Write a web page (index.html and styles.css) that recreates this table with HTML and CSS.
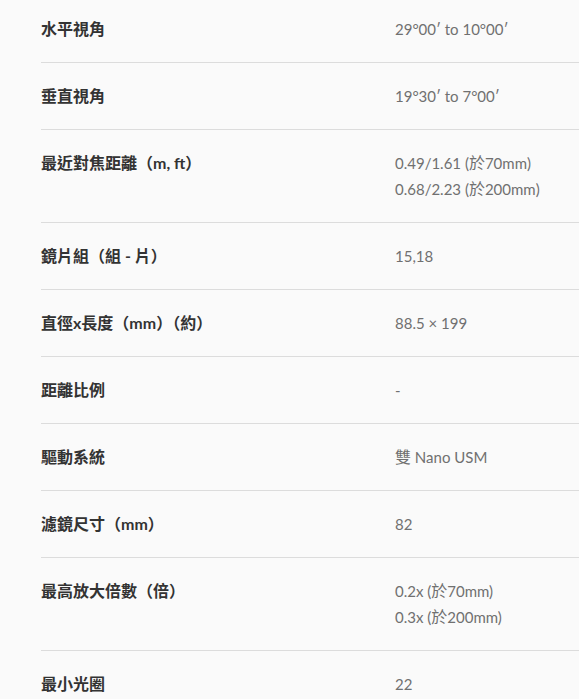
FILE: index.html
```html
<!DOCTYPE html>
<html lang="zh-Hant">
<head>
<meta charset="utf-8">
<link rel="stylesheet" href="styles.css">
</head>
<body>
<div class="specs">
  <div class="row"><div class="label">水平視角</div><div class="value">29°00′ to 10°00′</div></div>
  <div class="row"><div class="label">垂直視角</div><div class="value">19°30′ to 7°00′</div></div>
  <div class="row"><div class="label">最近對焦距離（m, ft）</div><div class="value">0.49/1.61 (<span class="cjk">於</span>70mm)<br>0.68/2.23 (<span class="cjk">於</span>200mm)</div></div>
  <div class="row"><div class="label">鏡片組（組 - 片）</div><div class="value">15,18</div></div>
  <div class="row"><div class="label">直徑x長度（mm）（約）</div><div class="value">88.5 × 199</div></div>
  <div class="row"><div class="label">距離比例</div><div class="value">-</div></div>
  <div class="row"><div class="label">驅動系統</div><div class="value"><span class="cjk">雙</span> Nano USM</div></div>
  <div class="row"><div class="label">濾鏡尺寸（mm）</div><div class="value">82</div></div>
  <div class="row"><div class="label">最高放大倍數（倍）</div><div class="value">0.2x (<span class="cjk">於</span>70mm)<br>0.3x (<span class="cjk">於</span>200mm)</div></div>
  <div class="row"><div class="label">最小光圈</div><div class="value">22</div></div>
</div>
</body>
</html>
```
FILE: styles.css
```css
html, body {
  margin: 0;
  padding: 0;
  background: #fafafa;
}
body {
  font-family: Lato, "Noto Sans CJK TC", sans-serif;
  font-size: 15px;
  line-height: 26px;
  overflow: hidden;
}
.specs {
  margin-top: -4px;
  margin-left: 41px;
}
.row {
  display: grid;
  grid-template-columns: 354px 1fr;
  padding: 20px 0;
  border-bottom: 1px solid #dcdcdc;
}
.label {
  font-size: 16px;
  font-weight: 700;
  color: #333333;
}
.value {
  color: #707070;
}
.cjk {
  font-size: 16px;
}
```
